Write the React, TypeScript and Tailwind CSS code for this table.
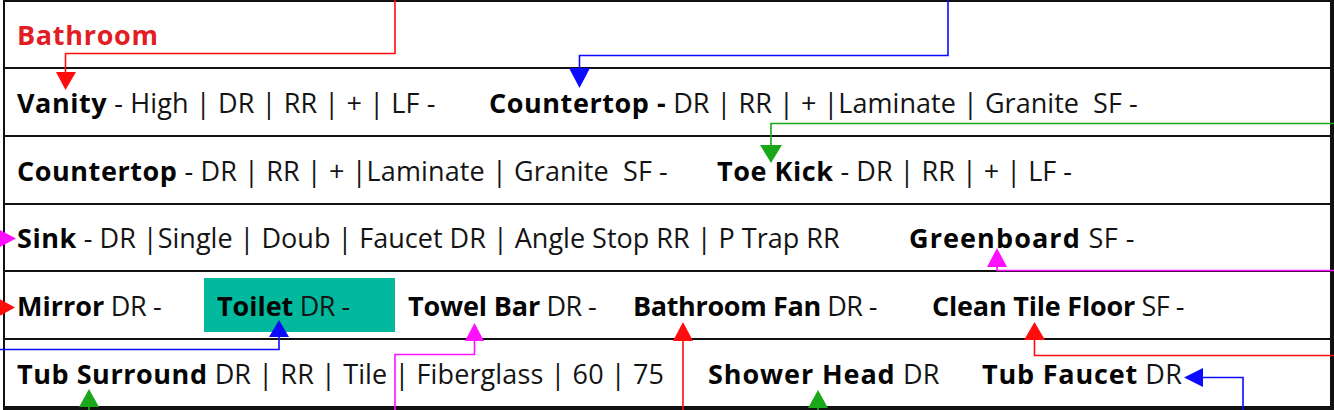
import React from "react";

const B = ({ children, t }: { children: React.ReactNode; t?: string }) => (
  <span className={`font-bold text-[#050505] ${t ?? "tracking-[0.55px]"}`}>{children}</span>
);

const Cell = ({ w, t, children }: { w?: string; t?: string; children: React.ReactNode }) => (
  <div className={`shrink-0 whitespace-pre pt-[2px] ${w ?? ""} ${t ?? ""}`}>{children}</div>
);

function Connectors() {
  const red = "#ff0d0d";
  const blue = "#0b0bff";
  const green = "#1aa81a";
  const mag = "#ff10ff";
  const sw = 1.6;
  return (
    <svg
      className="pointer-events-none absolute left-0 top-0"
      width={1334}
      height={410}
      viewBox="0 0 1334 410"
      fill="none"
    >
      {/* red top */}
      <polyline points="395,0 395,53.5 65.5,53.5 65.5,74" stroke={red} strokeWidth={sw} />
      <polygon points="56,72 76,72 65.5,90" fill={red} />
      {/* blue top */}
      <polyline points="948,0 948,55.5 579.5,55.5 579.5,70" stroke={blue} strokeWidth={sw} />
      <polygon points="569,68 590,68 579.5,88" fill={blue} />
      {/* green */}
      <polyline points="1334,123.5 771,123.5 771,147" stroke={green} strokeWidth={sw} />
      <polygon points="760,145 782,145 771,163" fill={green} />
      {/* magenta left arrow (sink) */}
      <polygon points="-4,228 -4,249 16,238.5" fill={mag} />
      {/* magenta right */}
      <polyline points="1334,270.5 997,270.5 997,262" stroke={mag} strokeWidth={sw} />
      <polygon points="987,267 1007,267 997,248" fill={mag} />
      {/* red left arrow (mirror) */}
      <polygon points="-4,297 -4,318 15,307.5" fill={red} />
      {/* blue bottom-left */}
      <polyline points="0,349.5 279,349.5 279,335" stroke={blue} strokeWidth={sw} />
      <polygon points="269,337 289,337 279,320" fill={blue} />
      {/* green bottom-left */}
      <line x1="89" y1="400" x2="89" y2="410" stroke={green} strokeWidth={sw} />
      <polygon points="79,407 99,407 89,389" fill={green} />
      {/* magenta bottom */}
      <polyline points="395,410 395,354.5 474.5,354.5 474.5,338" stroke={mag} strokeWidth={sw} />
      <polygon points="465,341 484,341 474.5,323" fill={mag} />
      {/* red middle */}
      <line x1="683" y1="410" x2="683" y2="338" stroke={red} strokeWidth={sw} />
      <polygon points="673,341 693,341 683,322" fill={red} />
      {/* green bottom middle */}
      <line x1="818" y1="400" x2="818" y2="410" stroke={green} strokeWidth={sw} />
      <polygon points="808,408 828,408 818,390" fill={green} />
      {/* red right */}
      <polyline points="1334,355.5 1034.5,355.5 1034.5,338" stroke={red} strokeWidth={sw} />
      <polygon points="1024,340 1045,340 1034.5,322" fill={red} />
      {/* blue right */}
      <polyline points="1243,410 1243,377.5 1200,377.5" stroke={blue} strokeWidth={sw} />
      <polygon points="1203,368 1203,387 1184,377.5" fill={blue} />
    </svg>
  );
}

export default function App() {
  return (
    <div
      className="relative h-[410px] w-[1334px] overflow-hidden bg-white text-[27px] tracking-[0.12px] text-[#141414]"
      style={{ fontFamily: '"Open Sans", "Liberation Sans", sans-serif' }}
    >
      <div className="ml-[3px] flex h-[410px] w-[1331px] flex-col border-b-4 border-l-2 border-r-4 border-t-2 border-[#111]">
        {/* Row 0 */}
        <div className="flex h-[65px] items-center pl-[12px]">
          <Cell>
            <span className="font-bold tracking-[0.7px] text-[#e21d24]">Bathroom</span>
          </Cell>
        </div>
        {/* Row 1 */}
        <div className="flex h-[68px] items-center border-t-2 border-[#111] pl-[12px]">
          <Cell w="w-[472px]">
            <B>Vanity</B> - High | DR | RR | + | LF -
          </Cell>
          <Cell t="tracking-[0.04px]">
            <B>Countertop -</B> DR | RR | + |Laminate | Granite  SF -
          </Cell>
        </div>
        {/* Row 2 */}
        <div className="flex h-[68px] items-center border-t-2 border-[#111] pl-[12px]">
          <Cell w="w-[700px]">
            <B>Countertop</B> - DR | RR | + |Laminate | Granite  SF -
          </Cell>
          <Cell t="tracking-[0.02px]">
            <B>Toe Kick</B> - DR | RR | + | LF -
          </Cell>
        </div>
        {/* Row 3 */}
        <div className="flex h-[67px] items-center border-t-2 border-[#111] pl-[12px]">
          <Cell w="w-[892px]" t="tracking-[0.01px]">
            <B>Sink</B> - DR |Single | Doub | Faucet DR | Angle Stop RR | P Trap RR
          </Cell>
          <Cell t="tracking-[0.5px]">
            <B t="tracking-[1.1px]">Greenboard</B> SF -
          </Cell>
        </div>
        {/* Row 4 */}
        <div className="flex h-[68px] items-center border-t-2 border-[#111] pl-[12px]">
          <Cell w="w-[187px]" t="tracking-[-0.4px]">
            <B t="tracking-[0px]">Mirror</B> DR -
          </Cell>
          <div className="flex h-[54px] w-[191px] shrink-0 items-center bg-[#02b99d] pl-[13px]">
            <Cell t="tracking-[-0.5px]">
              <B t="tracking-[-0.05px]">Toilet</B> DR -
            </Cell>
          </div>
          <div className="w-[13px] shrink-0" />
          <Cell w="w-[225px]" t="tracking-[-0.55px]">
            <B t="tracking-[-0.15px]">Towel Bar</B> DR -
          </Cell>
          <Cell w="w-[299px]" t="tracking-[-0.6px]">
            <B t="tracking-[-0.35px]">Bathroom Fan</B> DR -
          </Cell>
          <Cell t="tracking-[-0.55px]">
            <B t="tracking-[-0.2px]">Clean Tile Floor</B> SF -
          </Cell>
        </div>
        {/* Row 5 */}
        <div className="flex h-[68px] items-center border-t-2 border-[#111] pl-[12px]">
          <Cell w="w-[691px]">
            <B>Tub Surround</B> DR | RR | Tile | Fiberglass | 60 | 75
          </Cell>
          <Cell w="w-[274px]" t="tracking-[0.3px]">
            <B t="tracking-[0.9px]">Shower Head</B> DR
          </Cell>
          <Cell t="tracking-[0.3px]">
            <B t="tracking-[0.8px]">Tub Faucet</B> DR
          </Cell>
        </div>
      </div>
      <Connectors />
    </div>
  );
}
